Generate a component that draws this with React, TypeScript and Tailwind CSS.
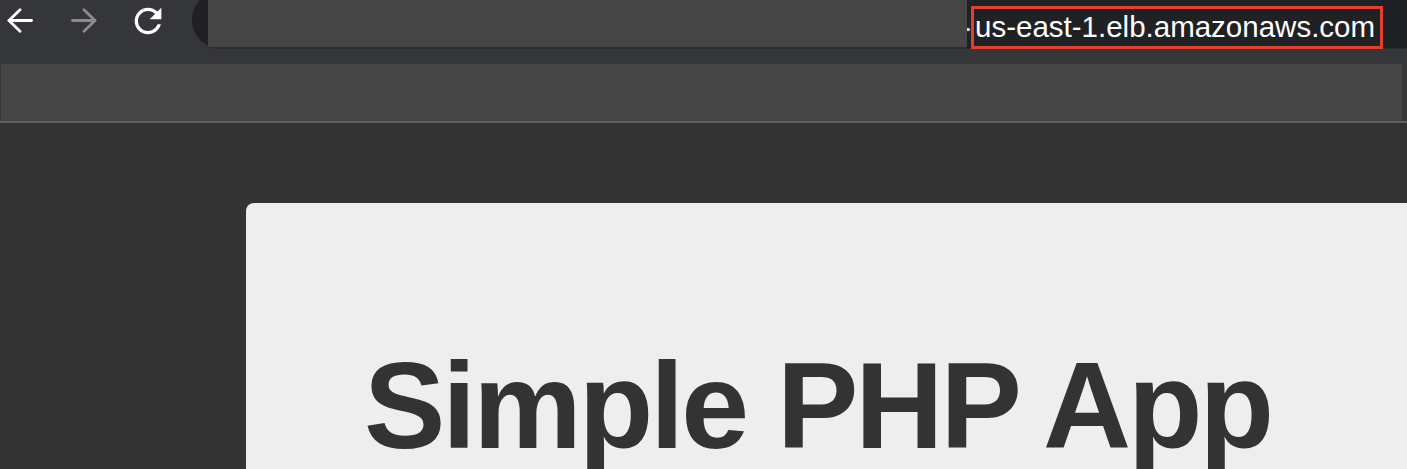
import React from "react";

export default function App() {
  return (
    <div className="w-[1407px] h-[469px] overflow-hidden bg-[#333333] flex flex-col" style={{ fontFamily: '"Liberation Sans", Arial, sans-serif' }}>
      {/* Toolbar row */}
      <div className="h-[64px] shrink-0 bg-[#35363a] flex items-start">
        <svg className="ml-[7px] mt-[8px]" width="26" height="25" viewBox="0 0 26 25" fill="none" stroke="#ffffff" strokeWidth="2.8" strokeLinecap="round" strokeLinejoin="round">
          <path d="M2 12.5H24.5" />
          <path d="M13 1.8L2 12.5L13 23.2" />
        </svg>
        <svg className="ml-[38px] mt-[8px]" width="26" height="25" viewBox="0 0 26 25" fill="none" stroke="#8b8b8d" strokeWidth="2.8" strokeLinecap="round" strokeLinejoin="round">
          <path d="M24 12.5H1.5" />
          <path d="M13 1.8L24 12.5L13 23.2" />
        </svg>
        <svg className="ml-[31px] mt-[1px]" width="40" height="40" viewBox="0 0 24 24" fill="#ffffff">
          <path d="M17.65 6.35C16.2 4.9 14.21 4 12 4c-4.42 0-7.99 3.58-7.99 8s3.57 8 7.99 8c3.73 0 6.84-2.55 7.73-6h-2.08c-.82 2.33-3.04 4-5.65 4-3.31 0-6-2.69-6-6s2.69-6 6-6c1.66 0 3.14.69 4.22 1.78L13 11h7V4l-2.35 2.35z" />
        </svg>
        <div className="ml-[24px] mt-[-9px] h-[57px] flex-1 rounded-l-full bg-[#202124] flex items-start shadow-[0_1px_0_#2a2b2e]">
          <div className="ml-[16px] mt-[9px] w-[759px] h-[47px] bg-[#454545] shadow-[0_1px_0_#2b2c2f]" />
          <div className="ml-[0px] mt-[37px] w-[3px] h-[3px] bg-white rounded-r-full" />
          <div className="ml-[1px] mt-[15px] w-[412px] h-[43px] border-[3px] border-[#e2402a] pl-[1px] text-white text-[29.5px] leading-[36px] whitespace-nowrap">
            us-east-1.elb.amazonaws.com
          </div>
        </div>
      </div>
      {/* Bookmarks / second row */}
      <div className="h-[57px] shrink-0 bg-[#35363a] flex">
        <div className="ml-[1px] w-[1401px] h-[57px] bg-[#454545]" />
      </div>
      <div className="h-[2px] shrink-0 bg-[#5f5e66]" />
      {/* Page */}
      <div className="flex-1 flex pt-[80px] pl-[246px]">
        <div className="flex-1 bg-[#eeeeee] rounded-tl-[8px] pl-[118px] pt-[142px]">
          <h1 className="text-[#333333] font-bold text-[122px] leading-[122px] tracking-[-3px] whitespace-nowrap">
            Simple PHP App
          </h1>
        </div>
      </div>
    </div>
  );
}
